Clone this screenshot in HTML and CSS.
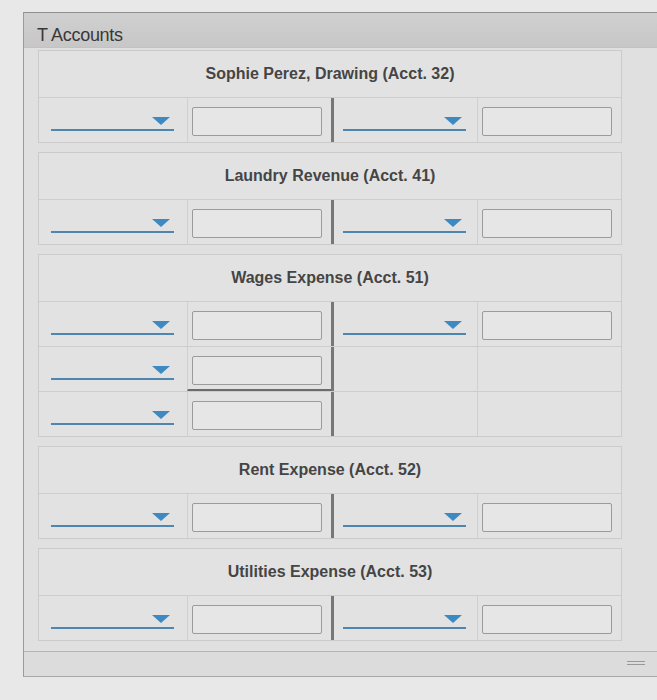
FILE: index.html
```html
<!DOCTYPE html>
<html>
<head>
<meta charset="utf-8">
<link rel="stylesheet" href="styles.css">
</head>
<body>
<div class="panel">
  <div class="panel-head">T Accounts</div>
  <div class="panel-body">

    <div class="acct">
      <div class="acct-title">Sophie Perez, Drawing (Acct. 32)</div>
      <div class="row">
        <div class="cell"><div class="dd"><span class="tri"></span></div></div>
        <div class="cell"><div class="inp"></div></div>
        <div class="cell t"><div class="dd"><span class="tri"></span></div></div>
        <div class="cell"><div class="inp"></div></div>
      </div>
    </div>

    <div class="acct">
      <div class="acct-title">Laundry Revenue (Acct. 41)</div>
      <div class="row">
        <div class="cell"><div class="dd"><span class="tri"></span></div></div>
        <div class="cell"><div class="inp"></div></div>
        <div class="cell t"><div class="dd"><span class="tri"></span></div></div>
        <div class="cell"><div class="inp"></div></div>
      </div>
    </div>

    <div class="acct">
      <div class="acct-title">Wages Expense (Acct. 51)</div>
      <div class="row">
        <div class="cell"><div class="dd"><span class="tri"></span></div></div>
        <div class="cell"><div class="inp"></div></div>
        <div class="cell t"><div class="dd"><span class="tri"></span></div></div>
        <div class="cell"><div class="inp"></div></div>
      </div>
      <div class="row">
        <div class="cell"><div class="dd"><span class="tri"></span></div></div>
        <div class="cell total"><div class="inp"></div></div>
        <div class="cell t"></div>
        <div class="cell"></div>
      </div>
      <div class="row">
        <div class="cell"><div class="dd"><span class="tri"></span></div></div>
        <div class="cell"><div class="inp"></div></div>
        <div class="cell t"></div>
        <div class="cell"></div>
      </div>
    </div>

    <div class="acct">
      <div class="acct-title">Rent Expense (Acct. 52)</div>
      <div class="row">
        <div class="cell"><div class="dd"><span class="tri"></span></div></div>
        <div class="cell"><div class="inp"></div></div>
        <div class="cell t"><div class="dd"><span class="tri"></span></div></div>
        <div class="cell"><div class="inp"></div></div>
      </div>
    </div>

    <div class="acct">
      <div class="acct-title">Utilities Expense (Acct. 53)</div>
      <div class="row">
        <div class="cell"><div class="dd"><span class="tri"></span></div></div>
        <div class="cell"><div class="inp"></div></div>
        <div class="cell t"><div class="dd"><span class="tri"></span></div></div>
        <div class="cell"><div class="inp"></div></div>
      </div>
    </div>

  </div>
  <div class="panel-foot"><span class="grip"></span></div>
</div>
</body>
</html>
```

FILE: styles.css
```css
html, body {
  margin: 0;
  padding: 0;
}
body {
  background: #e7e8e7;
  font-family: "Liberation Sans", Arial, sans-serif;
  width: 657px;
  height: 700px;
  overflow: hidden;
}
.panel {
  margin: 12px 0 0 23px;
  width: 660px;
  border-top: 1px solid #8e8e8e;
  border-left: 1px solid #9a9a9a;
  border-bottom: 1px solid #a8a8a8;
  background: #e0e0e0;
}
.panel-head {
  height: 35px;
  box-sizing: border-box;
  padding: 12px 0 0 13px;
  font-size: 18px;
  color: #383838;
  letter-spacing: -0.3px;
  background: linear-gradient(#d0d0d0, #c7c7c7);
  border-bottom: 1px solid #c2c2c2;
}
.panel-body {
  padding: 2px 0 10px 14px;
  display: flex;
  flex-direction: column;
  gap: 9px;
}
.acct {
  width: 582px;
  border: 1px solid #cbcbcb;
  background: #e2e2e2;
}
.acct-title {
  height: 46px;
  display: flex;
  align-items: center;
  justify-content: center;
  font-size: 16px;
  font-weight: bold;
  color: #454545;
}
.row {
  display: grid;
  grid-template-columns: 148px 144px 146px 144px;
  height: 44px;
  border-top: 1px solid #cdcdcd;
}
.cell {
  position: relative;
  border-left: 1px solid #d0d0d0;
  box-sizing: border-box;
}
.cell:first-child {
  border-left: none;
}
.cell.t {
  border-left: 3px solid #777;
}
.cell.total {
  border-bottom: 2px solid #6c6c6c;
}
.dd {
  margin: 19px 0 0 12px;
  width: 123px;
  height: 12px;
  border-bottom: 2px solid #4d86b0;
  display: flex;
  justify-content: flex-end;
  align-items: flex-start;
}
.cell.t .dd {
  margin-left: 9px;
}
.tri {
  width: 0;
  height: 0;
  margin-right: 4px;
  border-left: 9px solid transparent;
  border-right: 9px solid transparent;
  border-top: 8px solid #3d8ac2;
}
.inp {
  margin: 9px 0 0 4px;
  width: 130px;
  height: 29px;
  box-sizing: border-box;
  border: 1px solid #9b9b9b;
  border-radius: 2px;
  background: #e6e6e6;
}
.panel-foot {
  height: 24px;
  border-top: 1px solid #b4b4b4;
  background: #dcdcdc;
  position: relative;
}
.grip {
  position: absolute;
  left: 603px;
  top: 9px;
  width: 18px;
  height: 2px;
  border-top: 1px solid #999;
  border-bottom: 1px solid #999;
}
```
